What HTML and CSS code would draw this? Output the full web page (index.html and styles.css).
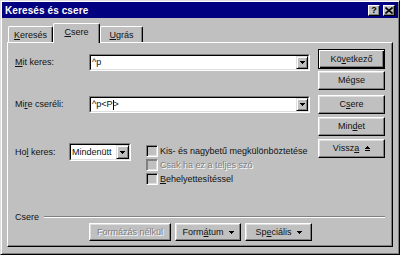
FILE: index.html
```html
<!DOCTYPE html>
<html lang="hu">
<head>
<meta charset="utf-8">
<title>Keresés és csere</title>
<link rel="stylesheet" href="styles.css">
</head>
<body>
<div class="window">
  <div class="titlebar">
    <span class="title">Keresés és csere</span>
    <div class="tbtns">
      <span class="tbtn q">?</span>
      <span class="tbtn"><svg width="8" height="7" viewBox="0 0 8 7"><path d="M0.5 0.5 L7.5 6.5 M7.5 0.5 L0.5 6.5" stroke="#000" stroke-width="1.6"/></svg></span>
    </div>
  </div>
  <div class="tabs">
    <div class="tab t1"><span><u>K</u>eresés</span></div>
    <div class="tab active t2"><span><u>C</u>sere</span></div>
    <div class="tab t3"><span><u>U</u>grás</span></div>
  </div>
  <div class="panel">
    <div class="top">
      <div class="fields">
        <div class="row r1">
          <span class="lbl lbl-wide"><u>M</u>it keres:</span>
          <div class="combo">
            <div class="combo-in">
              <span class="val">^p</span>
              <span class="dd"><svg width="5" height="3" viewBox="0 0 5 3"><path d="M0 0H5V1H0Z M1 1H4V2H1Z M2 2H3V3H2Z" fill="#000"/></svg></span>
            </div>
          </div>
        </div>
        <div class="row r2">
          <span class="lbl lbl-wide">Mi<u>r</u>e cseréli:</span>
          <div class="combo">
            <div class="combo-in">
              <span class="val">^p&lt;P<span class="caret"></span>&gt;</span>
              <span class="dd"><svg width="5" height="3" viewBox="0 0 5 3"><path d="M0 0H5V1H0Z M1 1H4V2H1Z M2 2H3V3H2Z" fill="#000"/></svg></span>
            </div>
          </div>
        </div>
        <div class="row r3">
          <span class="lbl lbl-hol">Ho<u>l</u> keres:</span>
          <div class="select">
            <div class="combo-in">
              <span class="val">Mindenütt</span>
              <span class="dd"><svg width="5" height="3" viewBox="0 0 5 3"><path d="M0 0H5V1H0Z M1 1H4V2H1Z M2 2H3V3H2Z" fill="#000"/></svg></span>
            </div>
          </div>
          <div class="checks">
            <div class="chk"><span class="box"></span><span>Kis- és na<u>g</u>ybetű megkülönböztetése</span></div>
            <div class="chk disabled"><span class="box"></span><span>Csak ha ez a teljes szó</span></div>
            <div class="chk"><span class="box"></span><span><u>B</u>ehelyettesítéssel</span></div>
          </div>
        </div>
      </div>
      <div class="buttons">
        <div class="btn default b1">Kö<u>v</u>etkező</div>
        <div class="btn b2">Mégse</div>
        <div class="btn b3">C<u>s</u>ere</div>
        <div class="btn b4">Min<u>d</u>et</div>
        <div class="btn b5">Vissz<u>a</u><svg class="upico" width="5" height="5" viewBox="0 0 5 5"><path d="M2 0H3V1H2Z M1 1H4V2H1Z M0 2H5V3H0Z M0 4H5V5H0Z" fill="#000"/></svg></div>
      </div>
    </div>
    <div class="group">
      <div class="ghead"><span>Csere</span><span class="gline"></span></div>
      <div class="gbtns">
        <div class="btn gb1 disabledtext">Formázás nélkül</div>
        <div class="btn gb2">Form<u>á</u>tum<svg class="downico" width="5" height="3" viewBox="0 0 5 3"><path d="M0 0H5V1H0Z M1 1H4V2H1Z M2 2H3V3H2Z" fill="#000"/></svg></div>
        <div class="btn gb3">Sp<u>e</u>ciális<svg class="downico" width="5" height="3" viewBox="0 0 5 3"><path d="M0 0H5V1H0Z M1 1H4V2H1Z M2 2H3V3H2Z" fill="#000"/></svg></div>
      </div>
    </div>
  </div>
</div>
</body>
</html>
```
FILE: styles.css
```css
* { box-sizing: border-box; }
html, body { margin: 0; padding: 0; }
body {
  width: 400px;
  height: 255px;
  background: #c0c0c0;
  font-family: "Liberation Sans", Arial, sans-serif;
  font-size: 9px;
  line-height: 11px;
  color: #111;
  overflow: hidden;
}
u { text-decoration: underline; text-underline-offset: 1px; }

.window {
  width: 400px;
  height: 255px;
  background: #c0c0c0;
  border: 1px solid;
  border-color: #dfdfdf #000 #000 #dfdfdf;
  box-shadow: inset 1px 1px #fff, inset -1px -1px #808080;
  padding: 1px;
}

.titlebar {
  height: 16px;
  background: #000080;
  color: #fff;
  display: flex;
  align-items: center;
  justify-content: space-between;
  padding: 0 3px 0 3px;
}
.title {
  font-weight: bold;
  font-size: 10px;
  letter-spacing: 0.1px;
}
.tbtns { display: flex; gap: 3px; }
.tbtn {
  width: 12px;
  height: 11px;
  background: #c0c0c0;
  border: 1px solid;
  border-color: #fff #000 #000 #fff;
  box-shadow: inset -1px -1px #808080;
  display: flex;
  align-items: center;
  justify-content: center;
  color: #000;
}
.tbtn.q { font-weight: bold; font-size: 9px; line-height: 9px; }

.tabs {
  margin-top: 5px;
  height: 19px;
  display: flex;
  align-items: flex-end;
  padding-left: 6px;
}
.tab {
  flex: none;
  height: 16px;
  border-top: 1px solid #fff;
  border-left: 1px solid #fff;
  border-right: 1px solid #000;
  border-radius: 2px 2px 0 0;
  box-shadow: inset -1px 0 #808080;
  display: flex;
  align-items: center;
  justify-content: center;
  padding-top: 1px;
}
.t1 { width: 45px; }
.t2 { width: 47px; }
.t3 { width: 43px; }
.tab.active {
  height: 20px;
  margin-bottom: -1px;
  background: #c0c0c0;
  position: relative;
  z-index: 1;
  padding-top: 0;
  padding-bottom: 3px;
}

.panel {
  margin-left: 5px;
  width: 386px;
  height: 205px;
  border: 1px solid;
  border-color: #fff #000 #000 #fff;
  box-shadow: inset -1px -1px #808080;
  padding: 6px 7px 5px 7px;
  display: flex;
  flex-direction: column;
}

.top { display: flex; gap: 8px; }
.fields { width: 295px; display: flex; flex-direction: column; }
.row { display: flex; align-items: center; }
.r1 { margin-top: 5px; height: 17px; }
.r2 { margin-top: 25px; height: 17px; }
.r3 { margin-top: 30px; align-items: flex-start; }
.lbl-wide { width: 74px; flex: none; }
.lbl-hol { width: 54px; flex: none; margin-top: 4px; }

.combo, .select {
  border: 1px solid;
  border-color: #808080 #fff #fff #808080;
}
.combo { flex: 1; height: 17px; }
.select { width: 62px; height: 18px; flex: none; }
.combo-in {
  height: 100%;
  border: 1px solid;
  border-color: #000 #dfdfdf #dfdfdf #000;
  background: #fff;
  display: flex;
  align-items: center;
}
.val { flex: 1; padding-left: 1px; white-space: nowrap; display: flex; align-items: center; }
.caret { display: inline-block; width: 1px; height: 10px; background: #000; }
.dd {
  width: 12px;
  height: 100%;
  flex: none;
  background: #c0c0c0;
  border: 1px solid;
  border-color: #dfdfdf #000 #000 #dfdfdf;
  box-shadow: inset 1px 1px #fff, inset -1px -1px #808080;
  display: flex;
  align-items: center;
  justify-content: center;
}
.select .dd { width: 13px; }

.checks { margin-left: 15px; margin-top: 1px; display: flex; flex-direction: column; }
.chk { height: 14px; display: flex; align-items: center; gap: 2px; white-space: nowrap; }
.box {
  width: 12px;
  height: 12px;
  flex: none;
  background: #c0c0c0;
  border: 1px solid;
  border-color: #808080 #fff #fff #808080;
  box-shadow: inset 1px 1px #000, inset -1px -1px #dfdfdf;
}
.chk.disabled { color: #808080; text-shadow: 1px 1px #fff; }
.chk.disabled .box { box-shadow: inset 1px 1px #808080, inset -1px -1px #dfdfdf; }

.buttons { width: 67px; display: flex; flex-direction: column; }
.btn {
  height: 19px;
  background: #c0c0c0;
  border: 1px solid;
  border-color: #fff #000 #000 #fff;
  box-shadow: inset -1px -1px #808080, inset 1px 1px #dfdfdf;
  display: flex;
  align-items: center;
  justify-content: center;
  white-space: nowrap;
}
.btn.default {
  height: 20px;
  border-color: #000;
  box-shadow: inset 1px 1px #fff, inset -1px -1px #000, inset -2px -2px #808080;
}
.b2 { margin-top: 2px; }
.b3 { margin-top: 5px; }
.b4 { margin-top: 3px; }
.b5 { margin-top: 3px; }
.upico { margin-left: 6px; }
.downico { margin-left: 5px; }

.group { margin-top: auto; }
.ghead { height: 12px; display: flex; align-items: center; }
.gline {
  flex: 1;
  height: 2px;
  margin-left: 5px;
  border-top: 1px solid #808080;
  border-bottom: 1px solid #fff;
}
.gbtns { display: flex; gap: 4px; padding-left: 74px; }
.gbtns .btn { height: 18px; }
.gb1 { width: 82px; }
.gb2 { width: 66px; }
.gb3 { width: 67px; }
.disabledtext { color: #808080; text-shadow: 1px 1px #fff; }
```
